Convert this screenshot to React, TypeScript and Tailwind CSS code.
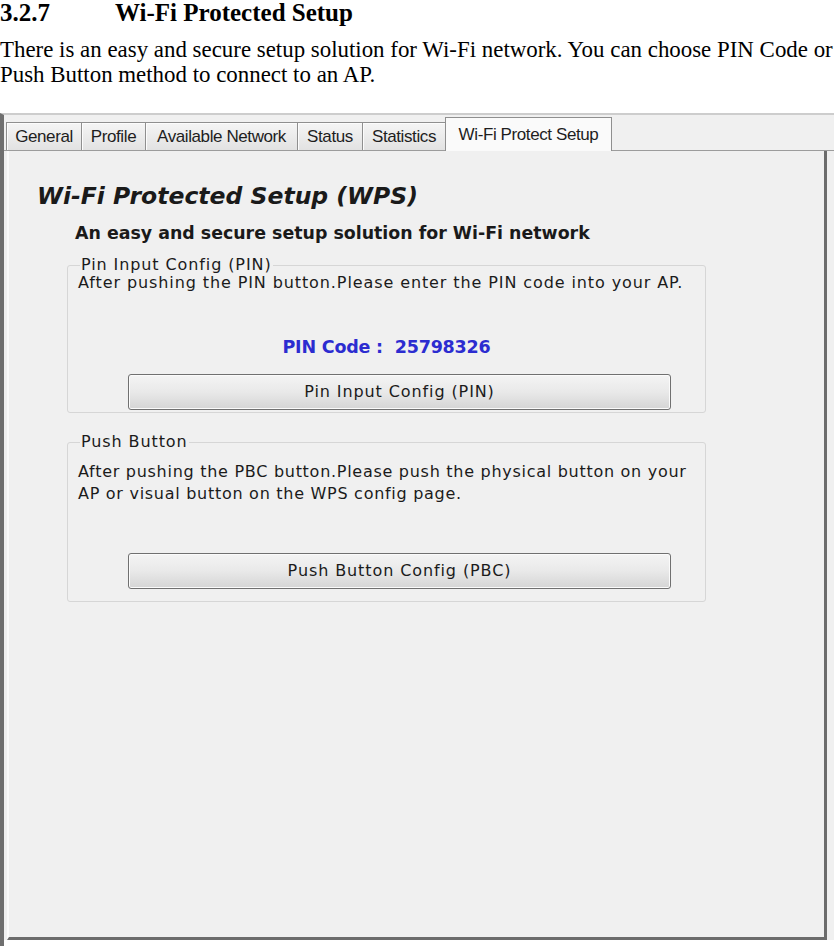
const TABS = [
  { label: "General", w: "w-[76px]" },
  { label: "Profile", w: "w-[65px]" },
  { label: "Available Network", w: "w-[153px]" },
  { label: "Status", w: "w-[66px]" },
  { label: "Statistics", w: "w-[84px]" },
];

const dlgFont = { fontFamily: '"DejaVu Sans", Verdana, sans-serif' };

function WinButton({ label }: { label: string }) {
  return (
    <button
      type="button"
      className="ml-[60px] flex h-[36px] w-[543px] items-center justify-center rounded-[3px] border border-[#707070] bg-linear-to-b from-[#f4f4f4] via-[#e9e9e9] to-[#d5d5d5] text-[16px] tracking-[0.9px] text-[#1b1b1b] shadow-[inset_0_0_0_1px_#fbfbfb]"
    >
      {label}
    </button>
  );
}

function Tabs() {
  return (
    <div className="flex h-[36px] items-end border-b border-[#9c9c9c] pl-[2px] font-['Liberation_Sans',Arial,sans-serif] text-[17px] tracking-[-0.4px] text-[#1e1e1e]">
      {TABS.map((t) => (
        <div
          key={t.label}
          className={`${t.w} flex h-[28px] items-center justify-center border border-b-0 border-[#8f8f8f] bg-linear-to-b from-[#f5f5f5] to-[#e2e2e2] shadow-[inset_1px_1px_0_#fcfcfc] -ml-px first:ml-0`}
        >
          {t.label}
        </div>
      ))}
      <div className="-mb-px -ml-px flex h-[34px] w-[167px] items-start justify-center border border-b-0 border-[#8f8f8f] bg-[#fafafa] pt-[4px]">
        Wi-Fi Protect Setup
      </div>
    </div>
  );
}

export default function App() {
  return (
    <div className="flex h-[946px] w-[834px] flex-col overflow-hidden bg-white text-black">
      <div className="font-['Liberation_Serif','Times_New_Roman',serif]">
        <h3 className="text-[25px] font-bold leading-[26px]">
          <span className="inline-block w-[115px]">3.2.7</span>
          Wi-Fi Protected Setup
        </h3>
        <p className="mt-[11px] whitespace-nowrap text-[22.9px] leading-[25px]">
          There is an easy and secure setup solution for Wi-Fi network. You can choose PIN Code or
          <br />
          Push Button method to connect to an AP.
        </p>
      </div>

      <div className="mt-[26px] flex flex-1 flex-col border-l-4 border-t-2 border-l-[#6f6f6f] border-t-[#cdcdcd] bg-white">
        <div className="flex h-[825px] flex-col bg-[#f0f0f0]">
          <Tabs />
          <div
            className="ml-[3px] mr-[7px] flex-1 border-b-[3px] border-l-2 border-r-[3px] border-b-[#6c6c6c] border-l-[#fbfbfb] border-r-[#6c6c6c] bg-[#f0f0f0]"
            style={dlgFont}
          >
            <h1 className="ml-[28px] mt-[30px] text-[23.5px] font-bold italic leading-[30px] text-[#1a1a1a]">
              Wi-Fi Protected Setup (WPS)
            </h1>
            <h2 className="ml-[66px] mt-[12px] text-[17.4px] font-bold leading-[20px] text-[#1a1a1a]">
              An easy and secure setup solution for Wi-Fi network
            </h2>

            <fieldset className="ml-[58px] mt-[14px] w-[639px] rounded-[3px] border border-[#d6d6d6] pb-[2px] text-[16px] tracking-[0.9px] text-[#1b1b1b]">
              <legend className="ml-[12px] px-[1px] leading-[16px]">Pin Input Config (PIN)</legend>
              <p className="ml-[10px] mt-[2px] leading-[16px]">
                After pushing the PIN button.Please enter the PIN code into your AP.
              </p>
              <p className="mt-[44px] text-center text-[17.5px] font-bold leading-[24px] tracking-[-0.2px] text-[#2c2cd0]">
                PIN Code :&nbsp; 25798326
              </p>
              <div className="mt-[15px]">
                <WinButton label="Pin Input Config (PIN)" />
              </div>
            </fieldset>

            <fieldset className="ml-[58px] mt-[21px] w-[639px] rounded-[3px] border border-[#d6d6d6] pb-[12px] text-[16px] tracking-[0.9px] text-[#1b1b1b]">
              <legend className="ml-[12px] px-[1px] leading-[16px]">Push Button</legend>
              <p className="ml-[10px] mt-[11px] leading-[22px] tracking-[0.72px]">
                After pushing the PBC button.Please push the physical button on your
                <br />
                AP or visual button on the WPS config page.
              </p>
              <div className="mt-[48px]">
                <WinButton label="Push Button Config (PBC)" />
              </div>
            </fieldset>
          </div>
        </div>
      </div>
    </div>
  );
}
